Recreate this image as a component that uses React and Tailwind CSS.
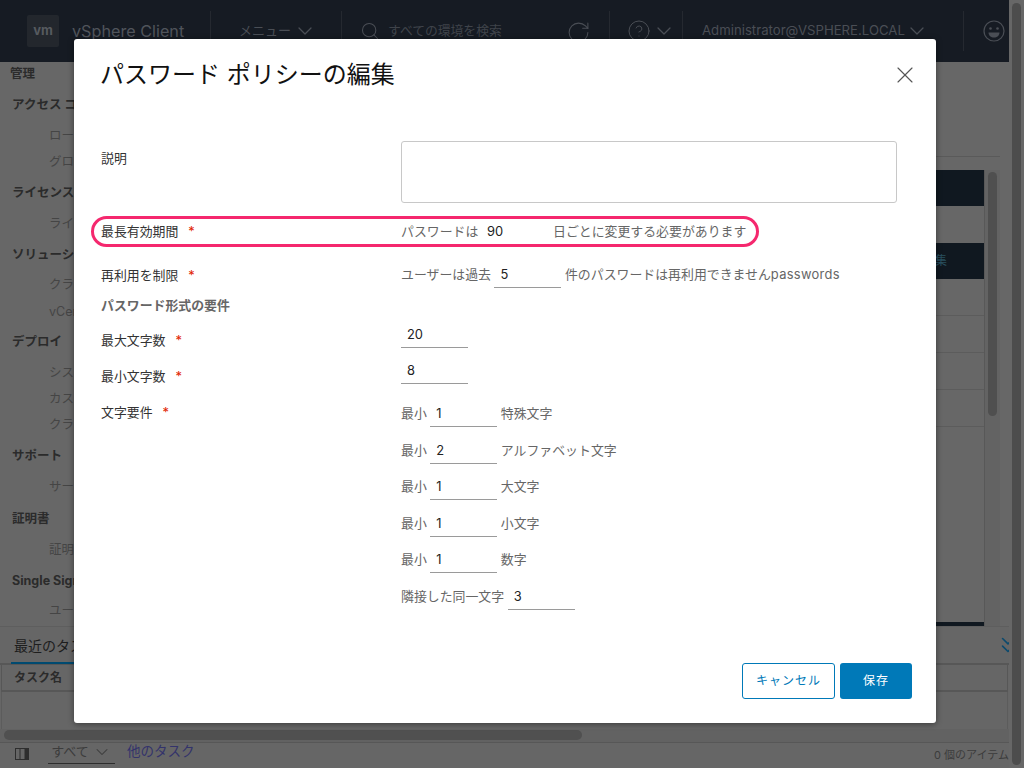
import React from "react";
import { ChevronDown, ChevronsDown, CircleHelp, RotateCw, Search, X } from "lucide-react";

const Star = () => <span className="text-[#e12200] ml-[10px]">*</span>;

function Field({ value, underline = true }) {
  return (
    <div className={`w-[67px] h-[26px] shrink-0 pl-[6px] pt-[1px] flex items-center text-[12.9px] text-[#222222] ${underline ? "border-b border-[#9a9a9a]" : ""}`}>
      {value}
    </div>
  );
}

function MinRow({ label = "最小", value, suffix }) {
  return (
    <div className="flex items-center gap-[3.5px] h-[26px] text-[12.9px] text-[#666666]">
      <span>{label}</span>
      <Field value={value} />
      {suffix && <span>{suffix}</span>}
    </div>
  );
}

const sideItems = [
  ["管理", "b", 0],
  ["アクセス コントロール", "b", 11],
  ["ロール", "i", 11],
  ["グローバル権限", "i", 6],
  ["ライセンス", "b", 11],
  ["ライセンス", "i", 11],
  ["ソリューション", "b", 11],
  ["クライアント プラグイン", "i", 10],
  ["vCenter Server 拡張機能", "i", 7],
  ["デプロイ", "b", 10],
  ["システム設定", "i", 11],
  ["カスタマー エクスペリエンス", "i", 6],
  ["クライアント設定", "i", 6],
  ["サポート", "b", 11],
  ["サービス", "i", 11],
  ["証明書", "b", 12],
  ["証明書の管理", "i", 11],
  ["Single Sign On", "b", 11],
  ["ユーザーおよびグループ", "i", 10],
];

const gapClass = { 0: "", 6: "mt-[6px]", 7: "mt-[7px]", 10: "mt-[10px]", 11: "mt-[11px]", 12: "mt-[12px]" };

export default function App() {
  return (
    <div
      className="relative w-[1024px] h-[768px] overflow-hidden flex bg-[#676767] text-[13px]"
      style={{ fontFamily: 'Inter, "Noto Sans CJK JP", sans-serif' }}
    >
      {/* page behind the dialog */}
      <div className="w-[1009px] flex flex-col">
        <header className="h-[62px] shrink-0 bg-[#161b23] flex items-center text-[#4a4e55]">
          <div className="w-[210px] flex items-center pl-[27px]">
            <div className="w-[32px] h-[32px] rounded-[2px] bg-[#23272d] flex items-center justify-center text-[13px] font-bold text-[#565a5f]">vm</div>
            <span className="ml-[13px] text-[16.2px] text-[#50545b] whitespace-nowrap">vSphere Client</span>
          </div>
          <div className="w-[131px] h-[40px] border-l border-[#252930] flex items-center pl-[28px] gap-[2px]">
            <span>メニュー</span>
            <ChevronDown size={24} strokeWidth={1.25} />
          </div>
          <div className="w-[268px] h-[40px] border-l border-[#252930] flex items-center pl-[18px]">
            <Search size={20} strokeWidth={1.25} />
            <span className="ml-[8px] text-[12.8px] text-[#3f434a]">すべての環境を検索</span>
          </div>
          <div className="relative">
            <RotateCw size={25} strokeWidth={1} className="absolute right-[18px] -top-[11px]" />
          </div>
          <div className="w-[73px] h-[40px] border-l border-[#252930] flex items-center pl-[17px] gap-[1px]">
            <CircleHelp size={24} strokeWidth={1} />
            <ChevronDown size={24} strokeWidth={1.25} />
          </div>
          <div className="w-[281px] h-[40px] border-l border-[#252930] flex items-center pl-[19px] whitespace-nowrap">
            <span className="text-[13.2px]">Administrator@VSPHERE.LOCAL</span>
            <ChevronDown size={24} strokeWidth={1.25} />
          </div>
          <div className="w-[46px] h-[40px] border-l border-[#252930] flex items-center pl-[19px]">
            <svg width="22" height="22" viewBox="0 0 22 22" fill="none" stroke="#4a4e55" strokeWidth="1.2">
              <circle cx="11" cy="11" r="10" />
              <circle cx="7.5" cy="8.5" r="1.3" fill="#4a4e55" stroke="none" />
              <circle cx="14.5" cy="8.5" r="1.3" fill="#4a4e55" stroke="none" />
              <path d="M5.5 12.5h11c0 3-2.5 5-5.500 5s-5.500-2-5.500-5z" fill="#4a4e55" stroke="none" />
            </svg>
          </div>
        </header>

        <div className="h-[564px] shrink-0 flex">
          <aside className="w-[240px] shrink-0 pt-[2px] overflow-hidden whitespace-nowrap">
            {sideItems.map(([text, kind, gap], i) => (
              <div
                key={i}
                className={`h-[20px] leading-[20px] text-[12.5px] ${gapClass[gap]} ${
                  kind === "b" ? `font-bold text-[#2b2b2b] ${i === 0 ? "pl-[10px]" : "pl-[12px]"}` : "pl-[49px] text-[#454545]"
                }`}
              >
                {text}
              </div>
            ))}
          </aside>
          <main className="flex-1 flex flex-col pr-[9px]">
            <div className="h-[95px] shrink-0 border-b border-[#5a5a5a]" />
            <div className="mt-[13px] h-[456px] shrink-0 flex">
              <div className="flex-1 flex flex-col">
                <div className="h-[36px] bg-[#101820]" />
                <div className="h-[37px]" />
                <div className="h-[36px] bg-[#101820] flex items-center justify-end pr-[37px] text-[12px] text-[#28505f]">編集</div>
                <div className="h-[37px] border-b border-[#5c5c5c]" />
                <div className="h-[37px] border-b border-[#5c5c5c]" />
                <div className="h-[37px] border-b border-[#5c5c5c]" />
                <div className="h-[37px] border-b border-[#5c5c5c]" />
                <div className="flex-1" />
                <div className="h-[4px] bg-[#101820]" />
              </div>
              <div className="w-[16px] pt-[2px] pb-[10px] pl-[3px] bg-[#636363] border-l border-[#585858]">
                <div className="w-[9px] h-[244px] rounded-full bg-[#4f4f4f]" />
              </div>
            </div>
          </main>
        </div>

        <section className="flex-1 flex flex-col bg-[#666666] border-t border-[#5e5e5e] overflow-hidden">
          <div className="h-[38px] shrink-0 border-b-[2px] border-[#575757] flex items-start justify-between">
            <div className="ml-[11px] px-[3px] pt-[2px] h-[37px] flex items-center border-b-[2px] border-[#004a70] text-[14px] text-[#1d1d1d] whitespace-nowrap">最近のタスク</div>
            <ChevronsDown size={26} strokeWidth={1.5} className="text-[#0b4a6e] mt-[5px] -mr-[12px]" />
          </div>
          <div className="mx-[1px] h-[27px] shrink-0 border-x border-b-[2px] border-[#575757] flex items-center pl-[12px] text-[12px] font-bold text-[#2b2b2b]">タスク名</div>
          <div className="mx-[1px] flex-1 border-x border-[#5c5c5c]" />
          <div className="h-[13px] shrink-0 pt-[1px] px-[4px] bg-[#626262]">
            <div className="w-[578px] h-[10px] rounded-full bg-[#505050]" />
          </div>
          <div className="h-[26px] shrink-0 border-t border-[#575757] flex items-start pl-[15px] text-[#3c3c3c]">
            <svg width="14" height="12" viewBox="0 0 14 12" className="shrink-0 mt-[5px]">
              <rect x="0.500" y="0.500" width="13" height="11" fill="none" stroke="#2e2e2e" />
              <path d="M5 0v12" stroke="#2e2e2e" />
              <rect x="9.500" y="0.500" width="4" height="11" fill="#2e2e2e" />
            </svg>
            <div className="ml-[19px] w-[67px] h-[21px] pb-[3px] border-b border-[#2e2e2e] flex items-center justify-center gap-[3px] text-[13px]">
              <span>すべて</span>
              <ChevronDown size={20} strokeWidth={1.25} />
            </div>
            <a className="ml-[12px] text-[#33336b] text-[13.500px] leading-[20px] -mt-[2px]">他のタスク</a>
            <span className="ml-auto text-[11px] mt-[4px]">0 個のアイテム</span>
          </div>
        </section>
      </div>

      {/* page scrollbar */}
      <div className="flex-1 pt-[3px] pl-[3px]">
        <div className="w-[9px] h-[762px] rounded-full bg-[#4d4d4d]" />
      </div>

      {/* dialog */}
      <div
        role="dialog"
        className="absolute left-[74px] top-[39px] w-[862px] h-[684px] bg-white rounded-[3px] shadow-[0_1px_6px_rgba(0,0,0,0.45)] flex flex-col"
      >
        <div className="h-[102px] shrink-0 pl-[26px] pr-[17px] pt-[18px] flex items-start justify-between">
          <h1 className="text-[24px] leading-[36px] text-[#111111]">パスワード ポリシーの編集</h1>
          <X size={28} strokeWidth={1} className="text-[#565656] mt-[4px]" />
        </div>

        <div className="pl-[27px] text-[12.9px] text-[#333333] flex flex-col">
          <div className="h-[75px] flex">
            <div className="w-[300px] pt-[8px] leading-[20px]">説明</div>
            <div className="w-[496px] h-[62px] border border-[#c8c8c8] rounded-[3px]" />
          </div>

          <div className="h-[46px] flex pt-[6px] leading-[20px]">
            <div className="w-[300px]">最長有効期間<Star /></div>
            <div className="flex text-[#666666]">
              <span className="w-[80px]">パスワードは</span>
              <span className="w-[72px] pl-[6px] text-[#222222]">90</span>
              <span>日ごとに変更する必要があります</span>
            </div>
          </div>

          <div className="h-[33px] flex">
            <div className="w-[300px] pt-[4px] leading-[20px]">再利用を制限<Star /></div>
            <div className="h-[26px]">
              <MinRow
                label="ユーザーは過去"
                value="5"
                suffix={<>件のパスワードは再利用できません<span className="tracking-[0.3px]">passwords</span></>}
              />
            </div>
          </div>

          <div className="h-[27px] leading-[22px] font-bold text-[#666666]">パスワード形式の要件</div>

          <div className="h-[36px] flex">
            <div className="w-[300px] pt-[9px] leading-[20px]">最大文字数<Star /></div>
            <Field value="20" />
          </div>
          <div className="h-[36px] flex">
            <div className="w-[300px] pt-[9px] leading-[20px]">最小文字数<Star /></div>
            <Field value="8" />
          </div>

          <div className="flex pt-[7px]">
            <div className="w-[300px] pt-[2px] leading-[20px]">文字要件<Star /></div>
            <div className="flex flex-col gap-[10.500px]">
              <MinRow value="1" suffix="特殊文字" />
              <MinRow value="2" suffix="アルファベット文字" />
              <MinRow value="1" suffix="大文字" />
              <MinRow value="1" suffix="小文字" />
              <MinRow value="1" suffix="数字" />
              <MinRow label="隣接した同一文字" value="3" />
            </div>
          </div>
        </div>

        <div className="mt-auto pb-[24px] pr-[24px] flex justify-end gap-[5px]">
          <button className="w-[93px] h-[36px] rounded-[3px] border border-[#0079b8] bg-white text-[#0079b8] text-[12px] tracking-[1px]">キャンセル</button>
          <button className="w-[72px] h-[36px] rounded-[3px] bg-[#0079b8] text-white text-[12px] tracking-[1px]">保存</button>
        </div>

        {/* highlight annotation */}
        <div className="absolute left-[17px] top-[177px] w-[668px] h-[31px] rounded-full border-[3px] border-[#f5286e] pointer-events-none" />
      </div>
    </div>
  );
}
